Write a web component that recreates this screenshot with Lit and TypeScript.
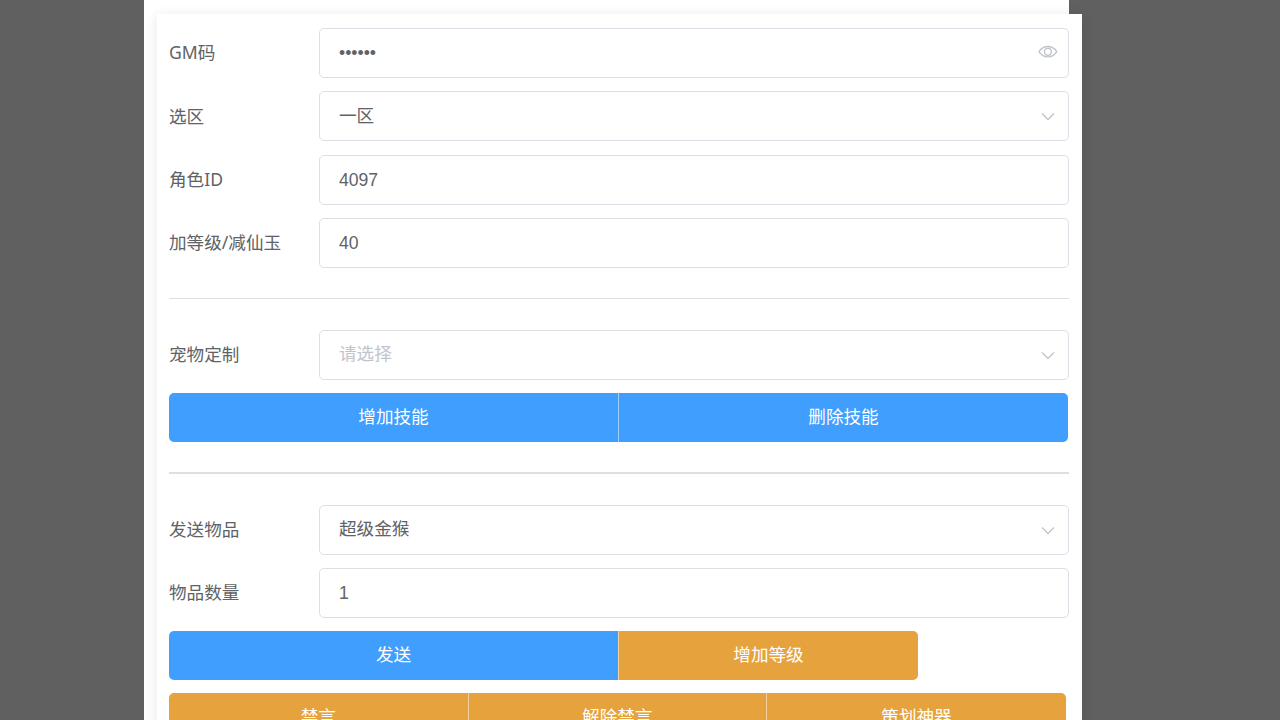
import { LitElement, html, css } from "lit";
import { customElement } from "lit/decorators.js";

const eye = html`<svg class="ico eye" width="20" height="20" viewBox="0 0 20 20" fill="none" stroke="#c0c4cc" stroke-width="1.4"><path d="M1 9.700C3.200 6.200 6.300 4.500 9.900 4.500s6.700 1.700 8.900 5.200c-2.200 3.500-5.300 5.200-8.900 5.200S3.200 13.200 1 9.700z"/><circle cx="9.900" cy="9.700" r="3.500"/></svg>`;
const chev = html`<svg class="ico" width="20" height="20" viewBox="0 0 20 20" fill="none" stroke="#c0c4cc" stroke-width="1.300"><path d="M4 7.500l6 6 6-6"/></svg>`;

@customElement("app-root")
export class AppRoot extends LitElement {
  static styles = css`
    :host {
      display: block;
      height: 720px;
      overflow: hidden;
      background: #606060;
      font-family: "Liberation Sans", "Noto Sans CJK SC", sans-serif;
      font-size: 17.6px;
      line-height: 1;
      color: #606266;
    }
    .panel {
      width: 925px;
      margin-left: 144px;
      padding-top: 14px;
      background: #fff;
      min-height: 1200px;
    }
    .card {
      width: 925px;
      margin-left: 12.500px;
      box-sizing: border-box;
      padding: 14px 12.500px;
      background: #fff;
      box-shadow: 0 2px 12px rgba(0, 0, 0, 0.1);
    }
    .row {
      display: flex;
      align-items: center;
      height: 50px;
      margin-bottom: 13.400px;
    }
    .label {
      width: 150px;
      flex: none;
      font-family: "Noto Sans", "Noto Sans CJK SC", sans-serif;
    }
    .box {
      flex: 1;
      height: 50px;
      box-sizing: border-box;
      border: 1px solid #dcdfe6;
      border-radius: 5px;
      padding: 0 10px 0 19px;
      display: flex;
      align-items: center;
      justify-content: space-between;
    }
    input {
      flex: 1;
      min-width: 0;
      border: 0;
      outline: 0;
      padding: 1px 0 0;
      font: inherit;
      color: inherit;
      background: none;
    }
    .ph {
      color: #c0c4cc;
    }
    .ico {
      flex: none;
    }
    .eye {
      margin-top: -2px;
    }
    .hr1 {
      height: 1px;
      background: #dcdfe6;
      margin: 29.800px 0 31px;
    }
    .hr2 {
      height: 2px;
      background: #dcdfe6;
      margin: 30px 0 30.200px;
    }
    .group {
      display: flex;
      margin-bottom: 13px;
    }
    .btn {
      height: 49px;
      box-sizing: border-box;
      display: flex;
      align-items: center;
      justify-content: center;
      color: #fff;
    }
    .btn + .btn {
      border-left: 1px solid rgba(255, 255, 255, 0.5);
    }
    .btn:first-child {
      border-radius: 5px 0 0 5px;
    }
    .btn:last-child {
      border-radius: 0 5px 5px 0;
    }
    .blue {
      background: #409eff;
    }
    .orange {
      background: #e6a23c;
    }
    .w449 {
      width: 449px;
    }
    .w450 {
      width: 450px;
    }
    .w300 {
      width: 300px;
    }
    .w299 {
      width: 298.500px;
    }
  `;

  private field(label: string, body: unknown) {
    return html`<div class="row"><div class="label">${label}</div><div class="box">${body}</div></div>`;
  }

  render() {
    return html`
      <div class="panel">
        <div class="card">
          ${this.field("GM码", html`<input type="password" value="123456" />${eye}`)}
          ${this.field("选区", html`<span>一区</span>${chev}`)}
          ${this.field("角色ID", html`<input value="4097" />`)}
          ${this.field("加等级/减仙玉", html`<input value="40" />`)}
          <div class="hr1"></div>
          ${this.field("宠物定制", html`<span class="ph">请选择</span>${chev}`)}
          <div class="group">
            <div class="btn blue w449">增加技能</div>
            <div class="btn blue w450">删除技能</div>
          </div>
          <div class="hr2"></div>
          ${this.field("发送物品", html`<span>超级金猴</span>${chev}`)}
          ${this.field("物品数量", html`<input value="1" />`)}
          <div class="group">
            <div class="btn blue w449">发送</div>
            <div class="btn orange w300">增加等级</div>
          </div>
          <div class="group">
            <div class="btn orange w299">禁言</div>
            <div class="btn orange w299">解除禁言</div>
            <div class="btn orange w300">策划神器</div>
          </div>
        </div>
      </div>
    `;
  }
}
